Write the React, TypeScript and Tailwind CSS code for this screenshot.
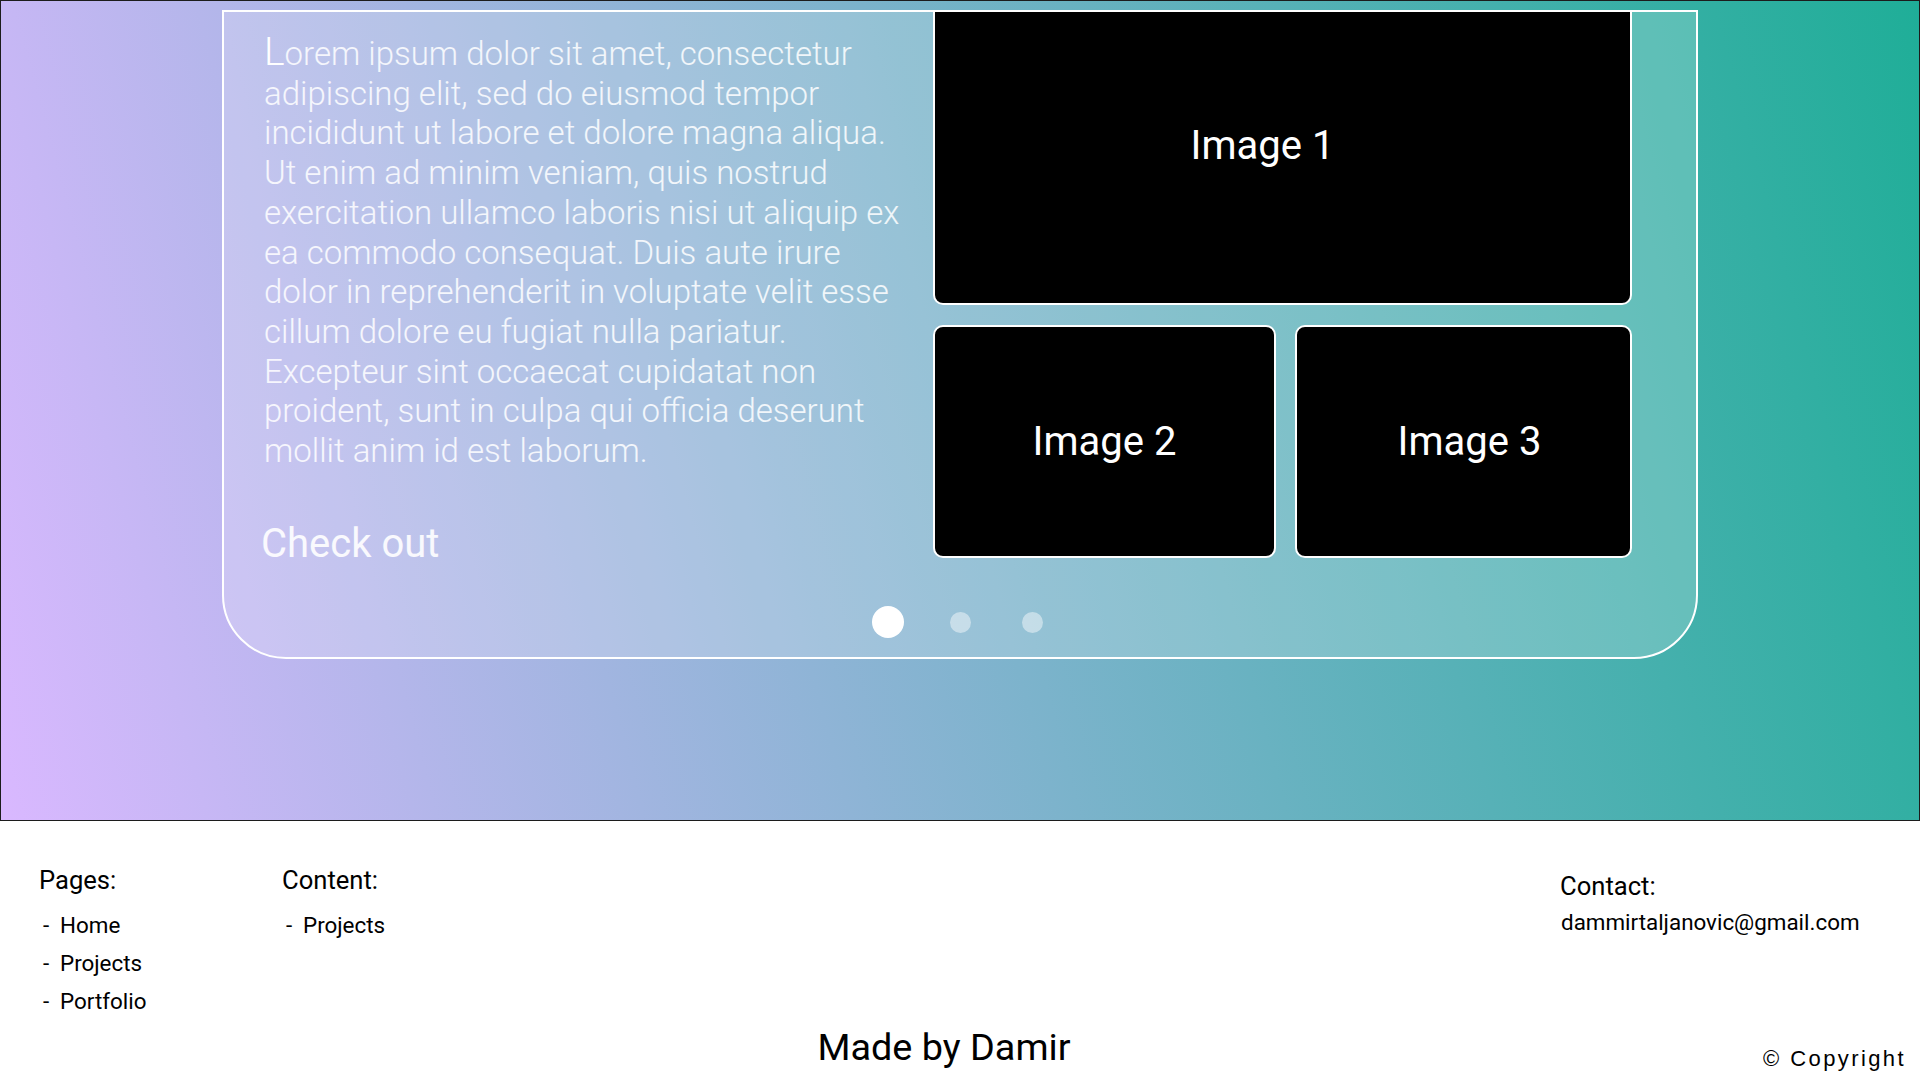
import React from "react";

function Dot({ big }: { big?: boolean }) {
  return (
    <div className="w-[32px] h-[32px] flex items-center justify-center">
      {big ? (
        <div className="w-[32px] h-[32px] rounded-full bg-white" />
      ) : (
        <div className="w-[21px] h-[21px] rounded-full bg-white/45" />
      )}
    </div>
  );
}

export default function App() {
  return (
    <div className="w-[1920px] font-['Roboto',sans-serif]">
      {/* Hero */}
      <section className="h-[821px] border border-[#1c1c1c] bg-[linear-gradient(75deg,#d9b8ff_0%,#1fae98_100%)] flex justify-center items-start">
        <div className="mt-[9px] w-[1476px] h-[649px] border-2 border-white rounded-b-[64px] bg-white/20 flex flex-col">
          <div className="h-[546px] flex">
            <div className="w-[645px] ml-[37px] pt-[21px] flex flex-col">
              <p className="pl-[3px] text-[33px] leading-[39.7px] font-light text-white/85 first-letter:text-[39px] first-letter:text-white">
                Lorem ipsum dolor sit amet, consectetur adipiscing elit, sed do eiusmod tempor incididunt ut labore et dolore magna aliqua. Ut enim ad minim veniam, quis nostrud exercitation ullamco laboris nisi ut aliquip ex ea commodo consequat. Duis aute irure dolor in reprehenderit in voluptate velit esse cillum dolore eu fugiat nulla pariatur. Excepteur sint occaecat cupidatat non proident, sunt in culpa qui officia deserunt mollit anim id est laborum.
              </p>
              <div className="mt-[49px] text-[40px] leading-[48px] text-white/90">Check out</div>
            </div>
            <div className="ml-[27px] w-[699px] flex flex-col gap-[20px]">
              <div className="h-[293px] bg-black border-2 border-t-0 border-white rounded-b-[10px] flex items-center justify-center pr-[40px] pb-[23px]">
                <span className="text-[40px] text-white">Image 1</span>
              </div>
              <div className="h-[233px] flex gap-[19px]">
                <div className="w-[343px] bg-black border-2 border-white rounded-[10px] flex items-center justify-center">
                  <span className="text-[40px] text-white">Image 2</span>
                </div>
                <div className="w-[337px] bg-black border-2 border-white rounded-[10px] flex items-center justify-center pl-[12px]">
                  <span className="text-[40px] text-white">Image 3</span>
                </div>
              </div>
            </div>
          </div>
          <div className="mt-[48px] h-[32px] flex justify-center gap-[40px]">
            <Dot big />
            <Dot />
            <Dot />
          </div>
        </div>
      </section>

      {/* Footer */}
      <footer className="h-[259px] bg-white text-black flex flex-col justify-between pt-[44px] pb-[11px]">
        <div className="flex items-start">
          <div className="ml-[39px] w-[243px]">
            <div className="text-[25.6px] leading-[30.7px]">Pages:</div>
            <ul className="mt-[10px] pl-[4px] text-[22.4px] leading-[38px]">
              <li className="flex"><span className="w-[17px]">-</span><span>Home</span></li>
              <li className="flex"><span className="w-[17px]">-</span><span>Projects</span></li>
              <li className="flex"><span className="w-[17px]">-</span><span>Portfolio</span></li>
            </ul>
          </div>
          <div>
            <div className="text-[25.6px] leading-[30.7px]">Content:</div>
            <ul className="mt-[10px] pl-[4px] text-[22.4px] leading-[38px]">
              <li className="flex"><span className="w-[17px]">-</span><span>Projects</span></li>
            </ul>
          </div>
          <div className="ml-auto mr-[40px] w-[320px] mt-[6px]">
            <div className="text-[25.6px] leading-[30.7px]">Contact:</div>
            <div className="mt-[6px] text-[22.4px] leading-[28px] pl-[1px]">dammirtaljanovic@gmail.com</div>
          </div>
        </div>
        <div className="grid grid-cols-[1fr_auto_1fr] items-end">
          <div />
          <div className="pr-[32px] text-[37.8px] leading-[43.2px]">Made by Damir</div>
          <div className="justify-self-end mr-[14px] font-['Liberation_Sans',Arial,sans-serif] text-[22px] leading-[20px] tracking-[2.4px]">
            © Copyright
          </div>
        </div>
      </footer>
    </div>
  );
}
